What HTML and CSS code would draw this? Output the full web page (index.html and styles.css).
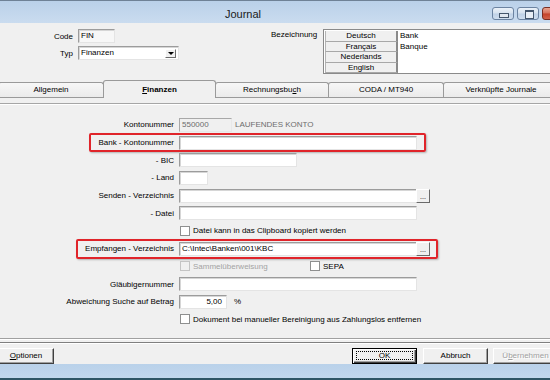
FILE: index.html
```html
<!DOCTYPE html>
<html lang="de">
<head>
<meta charset="utf-8">
<title>Journal</title>
<link rel="stylesheet" href="styles.css">
</head>
<body>
<div class="window">
  <div class="titlebar">
    <div class="title">Journal</div>
    <div class="wbtns">
      <span class="wb min"></span>
      <span class="wb max"></span>
      <span class="wb close"></span>
    </div>
  </div>

  <div class="header">
    <div class="hleft">
      <div class="hrow"><span class="hlbl">Code</span><div class="inp code">FIN</div></div>
      <div class="hrow"><span class="hlbl">Typ</span><div class="inp select">Finanzen<span class="arrow"></span></div></div>
    </div>
    <div class="bez-lbl">Bezeichnung</div>
    <div class="bez">
      <div class="bez-row"><div class="lang">Deutsch</div><div class="val">Bank</div></div>
      <div class="bez-row"><div class="lang">Français</div><div class="val">Banque</div></div>
      <div class="bez-row"><div class="lang">Nederlands</div><div class="val"></div></div>
      <div class="bez-row"><div class="lang">English</div><div class="val"></div></div>
    </div>
  </div>

  <div class="tabs">
    <div class="tab t-allg">Allgemein</div>
    <div class="tab active t-fin"><u>F</u>inanzen</div>
    <div class="tab t-rech">Rechnungsbu<u>c</u>h</div>
    <div class="tab t-coda">CODA / MT940</div>
    <div class="tab t-verk">Verknüpfte Journale</div>
  </div>

  <div class="panel">
    <div class="row">
      <span class="lbl">Kontonummer</span>
      <div class="inp dis w-konto">550000</div>
      <span class="grey-text">LAUFENDES KONTO</span>
    </div>
    <div class="row hl hl-bank">
      <span class="lbl">Bank - Kontonummer</span>
      <div class="inp w-long"></div>
    </div>
    <div class="row">
      <span class="lbl">- BIC</span>
      <div class="inp w-bic"></div>
    </div>
    <div class="row">
      <span class="lbl">- Land</span>
      <div class="inp w-land"></div>
    </div>
    <div class="row">
      <span class="lbl">Senden - Verzeichnis</span>
      <div class="inp w-path"></div>
      <div class="dots">...</div>
    </div>
    <div class="row">
      <span class="lbl">- Datei</span>
      <div class="inp w-path"></div>
    </div>
    <div class="row">
      <span class="lbl"></span>
      <span class="cb"></span><span>Datei kann in das Clipboard kopiert werden</span>
    </div>
    <div class="row hl hl-emp">
      <span class="lbl">Empfangen - Verzeichnis</span>
      <div class="inp w-path">C:\Intec\Banken\001\KBC</div>
      <div class="dots">...</div>
    </div>
    <div class="row">
      <span class="lbl"></span>
      <div class="cbgroup"><span class="cb dis"></span><span class="grey-text light">Sammelüberweisung</span></div>
      <span class="cb"></span><span>SEPA</span>
    </div>
    <div class="row">
      <span class="lbl">Gläubigernummer</span>
      <div class="inp w-path"></div>
    </div>
    <div class="row">
      <span class="lbl">Abweichung Suche auf Betrag</span>
      <div class="inp w-amt">5,00</div>
      <span class="pct">%</span>
    </div>
    <div class="row">
      <span class="lbl"></span>
      <span class="cb"></span><span>Dokument bei manueller Bereinigung aus Zahlungslos entfernen</span>
    </div>
  </div>

  <div class="sep sep1"></div>
  <div class="sep sep2"></div>

  <div class="btns">
    <div class="btn b-opt"><u>O</u>ptionen</div>
    <div class="btn default b-ok"><span>OK</span></div>
    <div class="btn b-abb">Abbruch</div>
    <div class="btn disabled b-ueb">Ü<u>b</u>ernehmen</div>
  </div>

  <div class="frame-bottom"></div>
</div>
</body>
</html>
```
FILE: styles.css
```css
* { box-sizing: border-box; }

body {
  margin: 0;
  font-family: "Liberation Sans", Arial, sans-serif;
  font-size: 8px;
  color: #000;
  background: #f0f0f0;
}

.window {
  width: 550px;
  height: 380px;
  overflow: hidden;
  background: #f0f0f0;
  display: flex;
  flex-direction: column;
}

/* ---------- title bar ---------- */
.titlebar {
  flex: none;
  height: 23px;
  border-top: 1px solid #6f8296;
  background: linear-gradient(#bad1e9, #cadcef);
  display: flex;
}
.title {
  width: 486px;
  flex: none;
  text-align: center;
  font-size: 11px;
  line-height: 20px;
  padding-top: 3px;
  color: #1a1a1a;
}
.wbtns {
  display: flex;
  gap: 3px;
  margin-left: 6px;
  padding-top: 6px;
}
.wb {
  position: relative;
  flex: none;
  width: 22px;
  height: 13px;
  border: 1px solid #6b83a1;
  border-radius: 3px;
  background: linear-gradient(#eaf1f8 0%, #d6e2ef 48%, #bfd1e6 52%, #cfdeee 100%);
}
.wb.min::after {
  content: "";
  position: absolute;
  left: 6px;
  top: 5px;
  width: 8px;
  height: 3px;
  border: 1px solid #44566c;
  background: #dfe7f0;
}
.wb.max::after {
  content: "";
  position: absolute;
  left: 7px;
  top: 2px;
  width: 7px;
  height: 6px;
  border: 1px solid #44566c;
  border-top-width: 2px;
  background: #e8eef5;
}
.wb.close {
  width: 40px;
  border-color: #7a2e22;
  background: linear-gradient(#eaa48f 0%, #d5705a 48%, #c34128 52%, #d2624a 100%);
}

/* ---------- header ---------- */
.header {
  flex: none;
  height: 57px;
  display: flex;
}
.hleft {
  width: 271px;
  flex: none;
  padding-top: 6px;
  display: flex;
  flex-direction: column;
  gap: 3px;
}
.hrow {
  display: flex;
  align-items: center;
  height: 14px;
}
.hlbl {
  width: 73px;
  margin-right: 5px;
  text-align: right;
}
.inp {
  flex: none;
  height: 14px;
  background: #fff;
  border: 1px solid;
  border-color: #9c9c9c #e4e4e4 #e4e4e4 #9c9c9c;
  box-shadow: inset 1px 1px 0 #d6d6d6;
  padding: 0 2px;
  line-height: 12px;
  white-space: nowrap;
  overflow: hidden;
}
.inp.code {
  width: 37px;
  background: #f7f7f7;
}
.inp.select {
  position: relative;
  width: 101px;
}
.arrow {
  position: absolute;
  right: 2px;
  top: 2px;
  width: 11px;
  height: 9px;
  background: #f0f0f0;
  border: 1px solid;
  border-color: #fff #6a6a6a #6a6a6a #fff;
}
.arrow::after {
  content: "";
  position: absolute;
  left: 2px;
  top: 2px;
  border-left: 3px solid transparent;
  border-right: 3px solid transparent;
  border-top: 3px solid #000;
}

.bez-lbl {
  width: 52px;
  flex: none;
  padding-top: 7px;
  line-height: 9px;
}
.bez {
  flex: none;
  margin-top: 6px;
  width: 240px;
  height: 45px;
  border: 1px solid #8a8a8a;
  padding: 1px 0 0 1px;
  background: #fff;
}
.bez-row {
  display: flex;
  height: 10.5px;
}
.lang {
  flex: none;
  width: 73px;
  background: #f0f0f0;
  border-left: 1px solid #b4b4b4;
  border-right: 2px solid #8a8a8a;
  border-bottom: 1px solid #a8a8a8;
  text-align: center;
  line-height: 10px;
}
.val {
  padding-left: 2px;
  line-height: 10.5px;
}

/* ---------- tabs ---------- */
.tabs {
  flex: none;
  display: flex;
  align-items: flex-end;
  width: 570px;
  height: 18px;
  margin-left: -2px;
  border-bottom: 1px solid #9a9a9a;
}
.tab {
  flex: none;
  height: 15px;
  margin-right: -1px;
  border: 1px solid #9a9a9a;
  border-bottom: none;
  border-radius: 3px 3px 0 0;
  background: linear-gradient(#f7f7f7, #ebebeb);
  text-align: center;
  line-height: 14px;
}
.tab.active {
  position: relative;
  height: 18px;
  margin-bottom: -1px;
  background: #f0f0f0;
  font-weight: bold;
  line-height: 17px;
}
.t-allg { width: 106px; }
.t-fin  { width: 113px; }
.t-rech { width: 114px; }
.t-coda { width: 116px; }
.t-verk { width: 116px; }

/* ---------- panel ---------- */
.panel {
  flex: none;
  height: 235px;
  margin-top: 5px;
  border-top: 1px solid #a6a6a6;
  box-shadow: inset 0 1px 0 #fff;
  padding-top: 12px;
}
.row {
  position: relative;
  display: flex;
  align-items: center;
  height: 17.7px;
  white-space: nowrap;
}
.lbl {
  flex: none;
  width: 174px;
  margin-right: 5px;
  text-align: right;
}
.inp.dis {
  background: #f0f0f0;
  color: #6d6d6d;
  border-color: #a8a8a8 #e8e8e8 #e8e8e8 #a8a8a8;
  box-shadow: none;
}
.w-konto { width: 53px; }
.w-long  { width: 238px; }
.w-bic   { width: 118px; }
.w-land  { width: 29px; }
.w-path  { width: 238px; }
.w-amt   { width: 48px; text-align: right; padding-right: 4px; }
.grey-text {
  color: #6d6d6d;
  margin-left: 3px;
}
.grey-text.light { color: #a3a3a3; margin-left: 0; }
.pct { margin-left: 7px; }

.dots {
  flex: none;
  width: 14px;
  height: 14px;
  margin-left: -1px;
  border: 1px solid;
  border-color: #fff #6a6a6a #6a6a6a #fff;
  background: #f0f0f0;
  font-size: 7px;
  line-height: 14px;
  text-align: center;
}

.cb {
  flex: none;
  width: 10px;
  height: 10px;
  margin-left: 1px;
  margin-right: 3px;
  border: 1px solid #8e8f8f;
  background: #fff;
}
.cb.dis {
  background: #f0f0f0;
  border-color: #c4c4c4;
}
.cbgroup {
  flex: none;
  display: flex;
  align-items: center;
  width: 130px;
}

/* red annotation boxes drawn over the rows */
.hl::before {
  content: "";
  position: absolute;
  top: -1px;
  bottom: -1px;
  border: 2px solid #e0242a;
  border-radius: 2px;
  box-shadow: 1px 1px 2px rgba(0, 0, 0, 0.25);
  pointer-events: none;
}
.hl-bank::before { left: 89px; width: 333px; }
.hl-emp::before  { left: 76px; width: 358px; }

/* ---------- footer ---------- */
.sep {
  flex: none;
  height: 2px;
  border-top: 1px solid #a0a0a0;
  border-bottom: 1px solid #fff;
}
.sep1 { margin-bottom: 2px; }
.sep2 { border-top-color: #7f7f7f; margin-bottom: 4px; }

.btns {
  flex: none;
  display: flex;
  width: 575px;
  height: 16px;
}
.btn {
  flex: none;
  position: relative;
  width: 65px;
  height: 16px;
  border: 1px solid;
  border-color: #fff #404040 #404040 #fff;
  box-shadow: inset -1px -1px 0 #a0a0a0;
  background: #f0f0f0;
  text-align: center;
  line-height: 14px;
}
.b-opt { width: 56px; margin-left: -2px; }
.b-ok  { margin-left: auto; }
.b-abb { margin-left: 6px; }
.b-ueb { margin-left: 5px; margin-right: 17px; }
.btn.default {
  border-color: #000;
  box-shadow: inset 1px 1px 0 #fff, inset -1px -1px 0 #404040, inset -2px -2px 0 #a0a0a0;
}
.btn.default::after {
  content: "";
  position: absolute;
  left: 3px;
  right: 3px;
  top: 2px;
  bottom: 3px;
  border: 1px dotted #000;
}
.btn.disabled {
  color: #a0a0a0;
  text-shadow: 1px 1px 0 #fff;
}

.frame-bottom {
  flex: none;
  height: 16px;
  background: linear-gradient(#b9d1ea, #c2d7ec);
  border-bottom: 2px solid #2f5565;
}
```
